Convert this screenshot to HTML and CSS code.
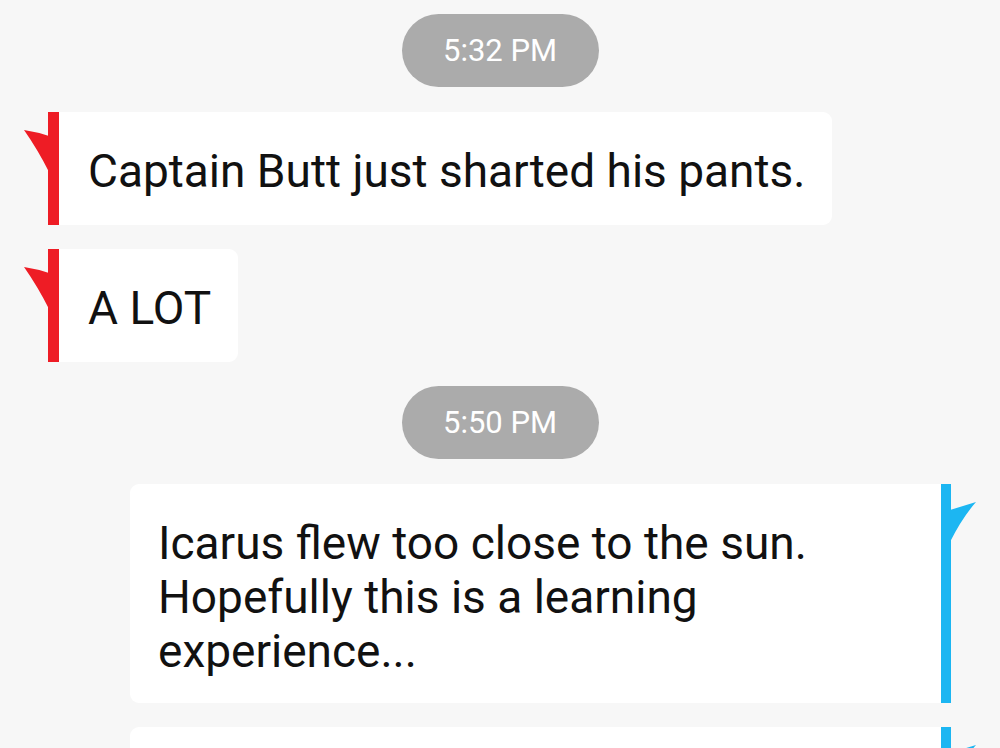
FILE: index.html
```html
<!DOCTYPE html>
<html lang="en">
<head>
<meta charset="utf-8">
<title>Chat</title>
<link rel="stylesheet" href="styles.css">
</head>
<body>
<div class="chat">
  <div class="time">5:32 PM</div>

  <div class="msg in">
    <div class="bar">
      <svg class="tail" width="25" height="46" viewBox="0 0 25 46"><path d="M0 2 Q13 4 25 8 V44 Q14 22 0 2 Z"/></svg>
    </div>
    <div class="bubble">Captain Butt just sharted his pants.</div>
  </div>

  <div class="msg in">
    <div class="bar">
      <svg class="tail" width="25" height="46" viewBox="0 0 25 46"><path d="M0 2 Q13 4 25 8 V44 Q14 22 0 2 Z"/></svg>
    </div>
    <div class="bubble">A LOT</div>
  </div>

  <div class="time">5:50 PM</div>

  <div class="msg out">
    <div class="bubble">Icarus flew too close to the sun.<br>Hopefully this is a learning experience...</div>
    <div class="bar">
      <svg class="tail" width="26" height="46" viewBox="0 0 26 46"><path d="M0 10 Q13 6 26 2 Q12 18 0 42 Z"/></svg>
    </div>
  </div>

  <div class="msg out">
    <div class="bubble empty"></div>
    <div class="bar">
      <svg class="tail" width="26" height="46" viewBox="0 0 26 46"><path d="M0 10 Q13 6 26 2 Q12 18 0 42 Z"/></svg>
    </div>
  </div>
</div>
</body>
</html>
```

FILE: styles.css
```css
html, body {
  margin: 0;
  padding: 0;
  background: #f7f7f7;
  height: 100%;
  overflow: hidden;
}

body {
  font-family: Roboto, "Noto Sans", "Liberation Sans", sans-serif;
  color: #111;
}

.chat {
  display: flex;
  flex-direction: column;
  align-items: center;
  gap: 24px;
  padding-top: 14px;
}

.time {
  background: #ababab;
  color: #fff;
  font-size: 31px;
  height: 73px;
  width: 197px;
  border-radius: 37px;
  margin-bottom: 1px;
  display: flex;
  align-items: center;
  justify-content: center;
}

.msg {
  display: flex;
  align-items: stretch;
}

.msg.in {
  align-self: flex-start;
  margin-left: 48px;
}

.msg.out {
  align-self: flex-end;
  margin-right: 49px;
  width: 821px;
}

.bar {
  position: relative;
  flex: none;
}

.msg.in .bar {
  width: 11px;
  background: #ee1c25;
}

.msg.out .bar {
  width: 10px;
  background: #1cb6f2;
}

.tail {
  position: absolute;
  top: 16px;
  display: block;
}

.msg.in .tail {
  left: -24px;
  fill: #ee1c25;
}

.msg.out .tail {
  left: 9px;
  fill: #1cb6f2;
}

.bubble {
  background: #fff;
  font-size: 46px;
  line-height: normal;
  padding: 32px 27px 27px 29px;
}

.msg.in .bubble {
  border-radius: 0 9px 9px 0;
}

.msg.out .bubble {
  flex: 1;
  border-radius: 9px 0 0 9px;
  padding-left: 28px;
  padding-bottom: 25px;
}

.bubble.empty {
  min-height: 120px;
}
```
